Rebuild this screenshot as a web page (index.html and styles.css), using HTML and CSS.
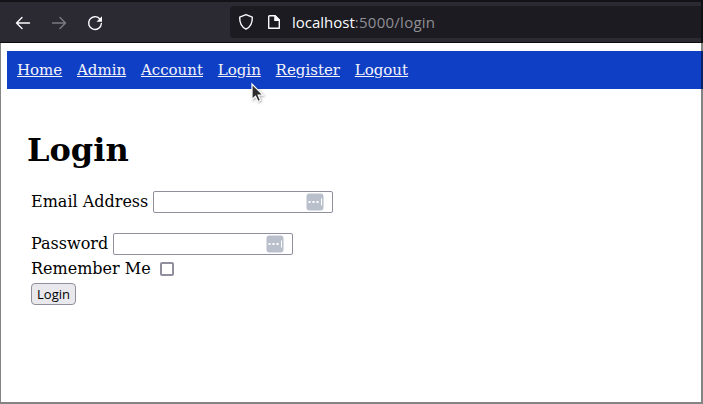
FILE: index.html
```html
<!DOCTYPE html>
<html lang="en">
<head>
<meta charset="utf-8">
<title>Login</title>
<link rel="stylesheet" href="styles.css">
</head>
<body>
<div class="window">
  <header class="toolbar">
    <svg class="controls" width="90" height="20" viewBox="0 0 90 20" fill="none">
      <path class="on" d="M15.500 10H2.500M8 4.500L2.500 10L8 15.500"/>
      <path class="off" d="M38.500 10H51.500M46 4.500L51.500 10L46 15.500"/>
      <path class="on" d="M85.700 5.700A6.400 6.400 0 1 0 87.400 10.500"/>
      <path class="fill" d="M88 3.200V8.700H82.500Z"/>
    </svg>
    <div class="address">
      <svg width="46" height="20" viewBox="0 0 46 20" fill="none">
        <path class="on" d="M9 2.700L15.300 5.100C15.500 10.500 13.500 15 9 17.200C4.500 15 2.500 10.500 2.700 5.100Z"/>
        <path class="on" d="M32.600 3.700H38L42.300 8V16.300H31.700V4.600Q31.700 3.700 32.600 3.700Z"/>
        <path class="fill" d="M37.200 3.300H38.500L42.700 7.500V9H37.200Z"/>
      </svg>
      <span class="url"><b>localhost</b>:5000/login</span>
    </div>
  </header>
  <main class="page">
    <nav class="nav">
      <a href="#">Home</a><a href="#">Admin</a><a href="#">Account</a><a href="#">Login</a><a href="#">Register</a><a href="#">Logout</a>
    </nav>
    <section class="content">
      <h1>Login</h1>
      <form>
        <div class="row email"><label for="email">Email Address</label>
          <span class="field"><input id="email" type="text"><svg class="key" width="18" height="18" viewBox="0 0 18 18"><rect x=".5" y=".5" width="17" height="17" rx="3"/><path d="M2.500 8h2v2h-2zM6.500 8h2v2h-2zM10.500 8h2v2h-2zM15 5.500h1v7h-1z"/></svg></span></div>
        <div class="row password"><label for="password">Password</label>
          <span class="field"><input id="password" type="password"><svg class="key" width="18" height="18" viewBox="0 0 18 18"><rect x=".5" y=".5" width="17" height="17" rx="3"/><path d="M2.500 8h2v2h-2zM6.500 8h2v2h-2zM10.500 8h2v2h-2zM15 5.500h1v7h-1z"/></svg></span></div>
        <div class="row remember"><label for="remember">Remember Me</label><input id="remember" type="checkbox"></div>
        <button type="button">Login</button>
      </form>
    </section>
  </main>
  <svg class="pointer" width="16" height="22" viewBox="0 0 16 22"><path d="M2 2V17.500L5.500 14.300L8 19.500L10.500 18.300L8.200 13.200H13Z"/></svg>
</div>
</body>
</html>
```

FILE: styles.css
```css
* { box-sizing: border-box; }
body { margin: 0; background: #fff; color: #000; font: 16px "DejaVu Serif", serif; overflow: hidden; }
.window { position: relative; display: flex; flex-direction: column; height: 404px; border: solid #848484; border-width: 0 2px 2px 1px; }
.toolbar { display: flex; align-items: center; height: 43px; margin: 0 -2px 0 -1px; padding-left: 14px; background: #2b2a33; border-top: 2px solid #131217; border-bottom: 1px solid #0c0c0d; border-right: 2px solid #111115; }
.controls { margin-top: 1px; flex: none; }
.on { stroke: #fbfbfe; stroke-width: 1.4; stroke-linejoin: round; stroke-linecap: round; }
.off { stroke: #7b7a80; stroke-width: 1.4; stroke-linecap: round; stroke-linejoin: round; }
.fill { fill: #fbfbfe; }
.address { display: flex; align-items: center; flex: 1; height: 32px; margin-left: 126px; padding-left: 7px; background: #1c1b22; border-radius: 4px 0 0 4px; }
.url { margin-left: 9px; color: #8f8f94; font: 15px "Open Sans", sans-serif; letter-spacing: .25px; white-space: nowrap; }
.url b { color: #fbfbfe; font-weight: 400; letter-spacing: 0; }
.page { padding: 8px 0 0 6px; }
.nav { display: flex; gap: 14.800px; height: 38px; margin-right: -2px; padding: 9px 10px; background: #0f3fc5; border-right: 2px solid #08236c; }
.nav a { color: #f5f5fa; font-size: 15px; line-height: 20px; text-decoration: underline; }
.content { padding: 42px 0 0 20px; }
h1 { margin: 0; font-size: 32px; line-height: 38px; }
form { margin: 22px 0 0 4px; }
.row { display: flex; align-items: center; }
.row label { padding-bottom: 2px; }
.email, .password { height: 22px; gap: 5px; }
.password { margin-top: 20px; }
.field { position: relative; display: flex; }
.field input { width: 180px; height: 22px; margin: 0; border: 1px solid #8f8f9d; border-radius: 2px; background: #fff; }
.key { position: absolute; left: 153px; top: 2px; }
.key rect { fill: #b9c0cb; }
.key path { fill: #fff; }
.remember { height: 28px; gap: 9px; }
.remember input { appearance: none; width: 14px; height: 14px; margin: 0; border: 2px solid #8f8f9d; border-radius: 2px; }
button { display: block; width: 45px; height: 22px; padding: 0; border: 1px solid #8f8f9d; border-radius: 4px; background: #e9e9ed; color: #000; font: 13px "Open Sans", sans-serif; }
.pointer { position: absolute; left: 249px; top: 82px; filter: drop-shadow(1px 1px 1px rgba(0,0,0,.3)); }
.pointer path { fill: #2e2e2e; stroke: #fff; stroke-width: 1.2; }
```
